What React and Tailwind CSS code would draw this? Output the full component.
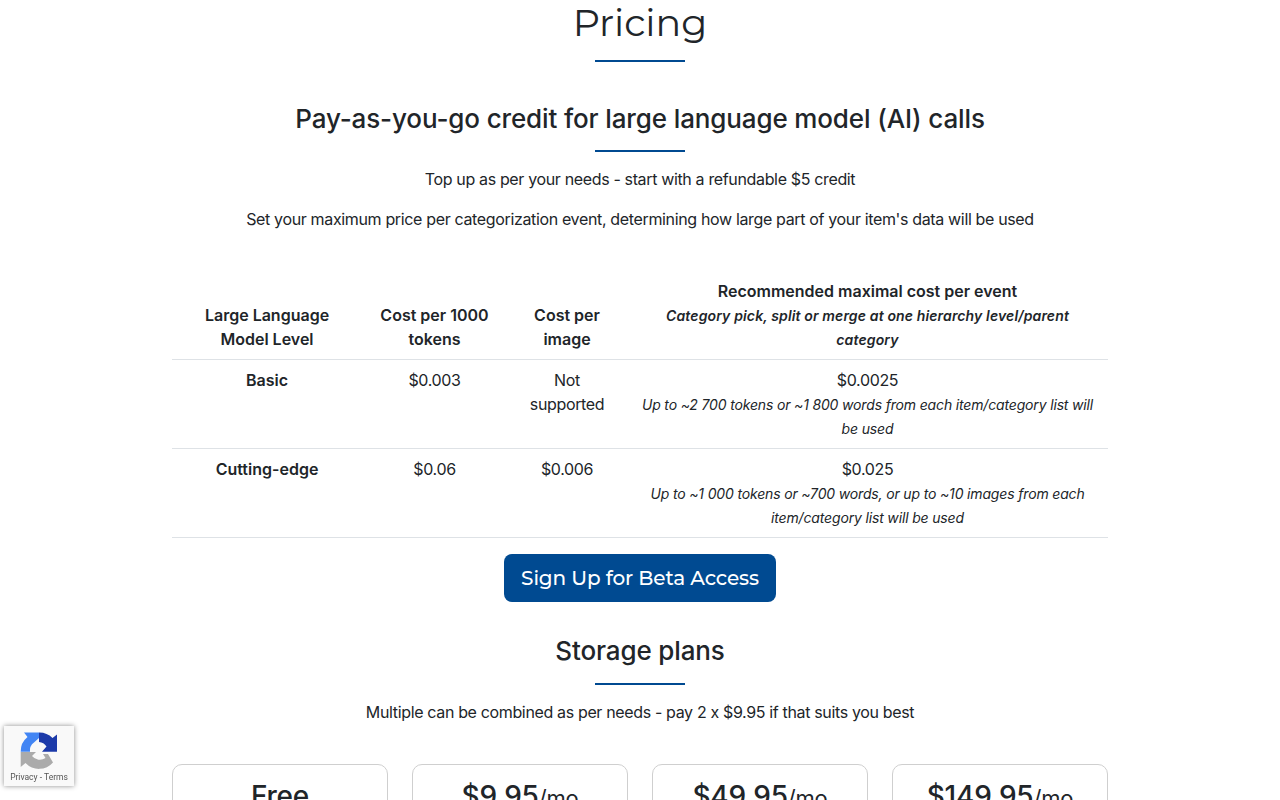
import React from "react";

const Rule = ({ className = "" }) => <div className={`mx-auto h-[2px] w-[90px] bg-[#004a91] ${className}`} />;
const display = "font-['Montserrat','Inter',sans-serif]";

function Recaptcha() {
  return (
    <div className="fixed left-[4px] top-[726px] flex h-[60px] w-[70px] flex-col items-center bg-[#f9f9f9] shadow-[0_0_5px_rgba(0,0,0,0.45)]">
      <svg viewBox="0 0 40 40" className="mt-[5px] h-[40px] w-[40px]">
        <path d="M20 1.5 A18.5 18.5 0 0 1 33.5 7 L38 3.5 L38 20.7 L23 20.7 L27.5 15.5 A10 10 0 0 0 20 11 Z" fill="#1c3aa9" />
        <path d="M5 1.5 L20 1.5 L20 7 L15 11.5 A10 10 0 0 0 11 20.7 L1.7 20.7 A18.5 18.5 0 0 1 8.5 6 Z" fill="#4285f4" />
        <path d="M1.7 21 L17 21 L13 25 A10 10 0 0 0 26.5 27 L24 23 L29 23 L34 31.5 A18.5 18.5 0 0 1 6.5 32 L1.7 36 Z" fill="#ababab" />
      </svg>
      <div className="mt-[1px] whitespace-nowrap font-['Roboto',sans-serif] text-[8.5px] leading-[10px] tracking-normal text-[#555]">Privacy - Terms</div>
    </div>
  );
}

function Card({ price, unit }) {
  return (
    <div className="flex h-[100px] flex-col items-center rounded-[10px] border border-[#cfcfcf] pt-[14px]">
      <div className="whitespace-nowrap text-[28px] font-medium leading-[34px] tracking-[-0.2px] text-[#212529]">
        {price}
        {unit && <span className="text-[22px] font-normal">{unit}</span>}
      </div>
    </div>
  );
}

export default function App() {
  const th = "border-b border-[#dee2e6] p-2 align-bottom font-semibold tracking-normal";
  const td = "border-b border-[#dee2e6] p-2 align-top";
  return (
    <div className="h-screen overflow-hidden bg-white text-center font-['Inter',sans-serif] text-[16px] leading-[24px] tracking-[-0.35px] text-[#212529]">
      <h1 className={`${display} pt-[1px] text-[38px] font-normal leading-[43px] tracking-normal`}>Pricing</h1>
      <Rule className="mt-[16px]" />
      <h2 className="mt-[41px] text-[26px] font-[550] leading-[32px] tracking-[-0.13px]">Pay-as-you-go credit for large language model (AI) calls</h2>
      <Rule className="mt-[15px]" />
      <p className="mt-[15px]">Top up as per your needs - start with a refundable $5 credit</p>
      <p className="mt-[16px]">Set your maximum price per categorization event, determining how large part of your item's data will be used</p>
      <div className="mx-auto mt-[40px] w-[936px]">
        <table className="w-[936px] table-fixed border-collapse">
          <colgroup>
            <col className="w-[190px]" />
            <col className="w-[145px]" />
            <col className="w-[120px]" />
            <col className="w-[481px]" />
          </colgroup>
          <thead>
            <tr>
              <th className={th}>Large Language Model Level</th>
              <th className={th}>Cost per 1000 tokens</th>
              <th className={th}>Cost per image</th>
              <th className={th}>
                Recommended maximal cost per event
                <div className="mx-auto -mb-px max-w-[455px] pt-px text-[14px] font-semibold italic tracking-[0.14px]">Category pick, split or merge at one hierarchy level/parent category</div>
              </th>
            </tr>
          </thead>
          <tbody>
            <tr>
              <td className={`${td} font-semibold tracking-normal`}>Basic</td>
              <td className={td}>$0.003</td>
              <td className={td}>Not supported</td>
              <td className={td}>
                $0.0025
                <div className="-mb-px pt-px text-[14px] italic tracking-[-0.16px]">Up to ~2 700 tokens or ~1 800 words from each item/category list will be used</div>
              </td>
            </tr>
            <tr>
              <td className={`${td} font-semibold tracking-normal`}>Cutting-edge</td>
              <td className={td}>$0.06</td>
              <td className={td}>$0.006</td>
              <td className={td}>
                $0.025
                <div className="-mb-px pt-px text-[14px] italic tracking-[-0.16px]">Up to ~1 000 tokens or ~700 words, or up to ~10 images from each item/category list will be used</div>
              </td>
            </tr>
          </tbody>
        </table>
      </div>
      <button className={`${display} mt-[16px] h-[48px] w-[272px] rounded-[8px] bg-[#004a91] text-[20px] font-medium tracking-[-0.13px] text-white`}>Sign Up for Beta Access</button>
      <h2 className="mt-[33px] text-[26px] font-[550] leading-[32px] tracking-[-0.13px]">Storage plans</h2>
      <Rule className="mt-[16px]" />
      <p className="mt-[15px]">Multiple can be combined as per needs - pay 2 x $9.95 if that suits you best</p>
      <div className="mx-auto mt-[40px] grid w-[936px] grid-cols-4 gap-6">
        <Card price="Free" />
        <Card price="$9.95" unit="/mo" />
        <Card price="$49.95" unit="/mo" />
        <Card price="$149.95" unit="/mo" />
      </div>
      <Recaptcha />
    </div>
  );
}
